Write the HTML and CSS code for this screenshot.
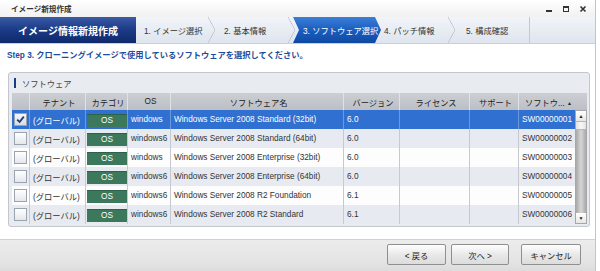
FILE: index.html
```html
<!DOCTYPE html>
<html lang="ja">
<head>
    <meta charset="UTF-8">
    <title>イメージ新規作成</title>
    <link rel="stylesheet" href="styles.css">
</head>
<body>
<div class="window">
    <div class="titlebar">
        <span class="titlebar__text">イメージ新規作成</span>
        <div class="titlebar__controls">
            <svg width="8" height="8" viewBox="0 0 8 8"><rect x="1" y="5" width="6" height="2" fill="#333"/></svg>
            <svg width="8" height="8" viewBox="0 0 8 8"><rect x="1.5" y="1.5" width="5" height="5" fill="none" stroke="#333" stroke-width="1"/><rect x="1" y="1" width="6" height="2" fill="#333"/></svg>
            <svg width="8" height="8" viewBox="0 0 8 8"><path d="M1.5 1.5 L6.5 6.5 M6.5 1.5 L1.5 6.5" stroke="#333" stroke-width="1.6"/></svg>
        </div>
    </div>

    <div class="steps">
        <div class="steps__main">イメージ情報新規作成</div>
        <div class="step">1. イメージ選択</div>
        <div class="step">2. 基本情報</div>
        <div class="step step--active">3. ソフトウェア選択</div>
        <div class="step">4. パッチ情報</div>
        <div class="step step--last">5. 構成確認</div>
    </div>

    <p class="guide">Step 3. クローニングイメージで使用しているソフトウェアを選択してください。</p>

    <div class="panel">
        <div class="panel__title">ソフトウェア</div>
        <div class="grid">
            <table class="grid__table">
                <thead>
                <tr>
                    <th class="col-check"></th>
                    <th class="col-tenant">テナント</th>
                    <th class="col-cat">カテゴリ</th>
                    <th class="col-os">OS</th>
                    <th class="col-name">ソフトウェア名</th>
                    <th class="col-ver">バージョン</th>
                    <th class="col-lic">ライセンス</th>
                    <th class="col-sup">サポート</th>
                    <th class="col-id">ソフトウ... <span class="sort">▲</span></th>
                </tr>
                </thead>
                <tbody>
                <tr class="row--selected">
                    <td class="cell-check"><span class="checkbox checkbox--on"><svg width="9" height="9" viewBox="0 0 9 9"><path d="M1.2 4.6 L3.6 7 L7.8 1.6" fill="none" stroke="#1f3c6e" stroke-width="1.8"/></svg></span></td>
                    <td>(グローバル)</td>
                    <td class="cell-badge"><span class="badge">OS</span></td>
                    <td>windows</td>
                    <td>Windows Server 2008 Standard (32bit)</td>
                    <td>6.0</td>
                    <td></td>
                    <td></td>
                    <td>SW00000001</td>
                </tr>
                <tr>
                    <td class="cell-check"><span class="checkbox"></span></td>
                    <td>(グローバル)</td>
                    <td class="cell-badge"><span class="badge">OS</span></td>
                    <td>windows6</td>
                    <td>Windows Server 2008 Standard (64bit)</td>
                    <td>6.0</td>
                    <td></td>
                    <td></td>
                    <td>SW00000002</td>
                </tr>
                <tr>
                    <td class="cell-check"><span class="checkbox"></span></td>
                    <td>(グローバル)</td>
                    <td class="cell-badge"><span class="badge">OS</span></td>
                    <td>windows</td>
                    <td>Windows Server 2008 Enterprise (32bit)</td>
                    <td>6.0</td>
                    <td></td>
                    <td></td>
                    <td>SW00000003</td>
                </tr>
                <tr>
                    <td class="cell-check"><span class="checkbox"></span></td>
                    <td>(グローバル)</td>
                    <td class="cell-badge"><span class="badge">OS</span></td>
                    <td>windows6</td>
                    <td>Windows Server 2008 Enterprise (64bit)</td>
                    <td>6.0</td>
                    <td></td>
                    <td></td>
                    <td>SW00000004</td>
                </tr>
                <tr>
                    <td class="cell-check"><span class="checkbox"></span></td>
                    <td>(グローバル)</td>
                    <td class="cell-badge"><span class="badge">OS</span></td>
                    <td>windows6</td>
                    <td>Windows Server 2008 R2 Foundation</td>
                    <td>6.1</td>
                    <td></td>
                    <td></td>
                    <td>SW00000005</td>
                </tr>
                <tr>
                    <td class="cell-check"><span class="checkbox"></span></td>
                    <td>(グローバル)</td>
                    <td class="cell-badge"><span class="badge">OS</span></td>
                    <td>windows6</td>
                    <td>Windows Server 2008 R2 Standard</td>
                    <td>6.1</td>
                    <td></td>
                    <td></td>
                    <td>SW00000006</td>
                </tr>
                </tbody>
            </table>
            <div class="grid__side">
                <div class="grid__corner"></div>
                <div class="scrollbar">
                    <div class="scrollbar__btn">▲</div>
                    <div class="scrollbar__thumb"></div>
                    <div class="scrollbar__track"></div>
                    <div class="scrollbar__btn">▼</div>
                </div>
            </div>
        </div>
    </div>

    <div class="footer">
        <button class="btn btn--back">&lt; 戻る</button>
        <button class="btn btn--next">次へ &gt;</button>
        <button class="btn btn--cancel">キャンセル</button>
    </div>
</div>
</body>
</html>
```

FILE: styles.css
```css
html,
body {
    margin: 0;
    background-color: #ffffff;
}

body {
    font-family: "Liberation Sans", "Noto Sans CJK JP", sans-serif;
    font-size: 8.25px;
    color: #222222;
}

.window {
    width: 596px;
    height: 271px;
    box-sizing: border-box;
    border-right: 1px solid #c4c4c4;
    display: flex;
    flex-direction: column;
}

/* タイトルバー */
.titlebar {
    height: 17px;
    display: flex;
    align-items: center;
    justify-content: space-between;
    padding: 0 8px 0 11px;
    background: linear-gradient(#ffffff, #f1f1f1);
}

.titlebar__text {
    font-weight: bold;
    font-size: 7.6px;
    color: #333333;
}

.titlebar__controls {
    display: flex;
    gap: 9px;
}

/* ステップ */
.steps {
    height: 26px;
    display: flex;
    background: linear-gradient(#f1f4f9, #dfe5ee);
    border-bottom: 1px solid #c9d0dc;
}

.steps__main {
    width: 136px;
    display: flex;
    align-items: center;
    justify-content: center;
    font-size: 10px;
    font-weight: bold;
    color: #ffffff;
    background: linear-gradient(#3a5aa6, #1b3a85 50%, #0f2a6c);
}

.step {
    position: relative;
    width: 80px;
    box-sizing: border-box;
    padding-left: 8px;
    display: flex;
    align-items: center;
    color: #333333;
}

.step:after {
    content: '';
    position: absolute;
    right: 1px;
    top: 0;
    width: 7px;
    height: 26px;
    background:
        linear-gradient(to top right, transparent calc(50% - 0.6px), #b3bccb 50%, transparent calc(50% + 0.6px)) top / 100% 50% no-repeat,
        linear-gradient(to bottom right, transparent calc(50% - 0.6px), #b3bccb 50%, transparent calc(50% + 0.6px)) bottom / 100% 50% no-repeat;
}

.step--active {
    z-index: 1;
    width: 88px;
    margin-left: -3px;
    margin-right: -5px;
    padding-left: 10px;
    color: #ffffff;
    background: linear-gradient(#3b7fd9, #1b5dbd 50%, #0e4aa3);
    clip-path: polygon(0 0, calc(100% - 6px) 0, 100% 50%, calc(100% - 6px) 100%, 0 100%, 6px 50%);
}

.step--active:after {
    display: none;
}

.step--last {
    width: 74px;
    padding-left: 10px;
    border-right: 1px solid #c2c9d4;
}

.step--last:after {
    display: none;
}

.guide {
    margin: 0;
    padding: 4px 0 0 7px;
    height: 23px;
    box-sizing: border-box;
    font-weight: bold;
    color: #1b4c9e;
}

/* パネル */
.panel {
    margin: 5px 5px 0 8px;
    width: 582px;
    box-sizing: border-box;
    border: 1px solid #c3c7cd;
    border-radius: 3px;
    padding: 0 2px 2px 3px;
    background-color: #e8ebf0;
}

.panel__title {
    height: 20px;
    display: flex;
    align-items: center;
    padding-left: 10px;
    position: relative;
    color: #444444;
}

.panel__title:before {
    content: '';
    position: absolute;
    left: 2px;
    top: 5px;
    width: 2px;
    height: 10px;
    background-color: #1a3a8a;
}

.grid {
    display: flex;
}

.grid__table {
    width: 563px;
    table-layout: fixed;
    border-collapse: separate;
    border-spacing: 0;
}

.grid__table th,
.grid__table td {
    box-sizing: border-box;
    padding: 0 0 0 3px;
    white-space: nowrap;
    overflow: hidden;
    text-align: left;
}

.grid__table th {
    height: 17px;
    font-weight: normal;
    text-align: center;
    color: #222222;
    background: linear-gradient(#cbced3, #bcc0c6);
    border-left: 1px solid #dfe2e6;
}

.grid__table th:first-child {
    border-left: none;
}

.col-check { width: 17px; }
.col-tenant { width: 56px; }
.col-cat { width: 42px; }
.col-os { width: 43px; }
.col-name { width: 173px; }
.col-ver { width: 56px; }
.col-lic { width: 70px; }
.col-sup { width: 49px; }
.col-id { width: 57px; }

.sort {
    font-size: 5px;
    vertical-align: 1px;
}

.grid__table td {
    height: 19px;
    border-left: 1px solid #c6cad0;
    background-color: #fdfdfd;
    color: #333333;
}

.grid__table td:first-child {
    border-left: none;
}

.grid__table tbody tr:nth-child(even) td {
    background-color: #e7ebf1;
}

.grid__table tbody tr.row--selected td {
    background-color: #2f70d0;
    color: #ffffff;
    border-left-color: #6c98dc;
}

.cell-check {
    padding: 0 0 0 2px !important;
}

.checkbox {
    display: flex;
    align-items: center;
    justify-content: center;
    width: 11px;
    height: 11px;
    border: 1px solid #9aa3b0;
    background: linear-gradient(#ffffff, #e4e7eb);
}

.checkbox--on {
    background: linear-gradient(#f4f6f9, #d6dce5);
}

.cell-badge {
    padding: 0 0 0 1px !important;
}

.badge {
    display: block;
    width: 40px;
    height: 12px;
    line-height: 12px;
    margin-top: 2px;
    text-align: center;
    background-color: #3b785c;
    border-top: 1px solid #2e6149;
    color: #ffffff;
}

.grid__side {
    width: 12px;
    display: flex;
    flex-direction: column;
}

.grid__corner {
    height: 17px;
    background: linear-gradient(#cbced3, #bcc0c6);
}

.scrollbar {
    height: 114px;
    display: flex;
    flex-direction: column;
    border: 1px solid #a7a7a7;
    box-sizing: border-box;
    background-color: #f0f0f0;
}

.scrollbar__btn {
    height: 10px;
    font-size: 5px;
    line-height: 10px;
    text-align: center;
    color: #222222;
    background: linear-gradient(#ffffff, #e6e6e6);
}

.scrollbar__thumb {
    height: 7px;
    border-top: 1px solid #b7b7b7;
    border-bottom: 1px solid #b7b7b7;
    background: linear-gradient(to right, #e2e2e2, #f8f8f8, #e2e2e2);
}

.scrollbar__track {
    flex: 1;
    background: linear-gradient(to right, #a9a9a9, #d6d6d6 50%, #a9a9a9);
}

/* ボタン */
.footer {
    margin-top: 12px;
    flex: 1;
    display: flex;
    justify-content: flex-end;
    align-items: flex-start;
    padding: 4px 14px 0 0;
    border-top: 1px solid #d2d2d2;
    background: linear-gradient(#ececec, #e4e4e4 70%, #dcdcdc);
}

.btn {
    height: 21px;
    padding: 0;
    font-family: inherit;
    font-size: 8.25px;
    color: #222222;
    border: 1px solid #8f8f8f;
    border-radius: 2px;
    background: linear-gradient(#fefefe, #e9e9e9 50%, #dcdcdc);
}

.btn--back { width: 59px; }
.btn--next { width: 58px; margin-left: 5px; }
.btn--cancel { width: 60px; margin-left: 12px; }
```
